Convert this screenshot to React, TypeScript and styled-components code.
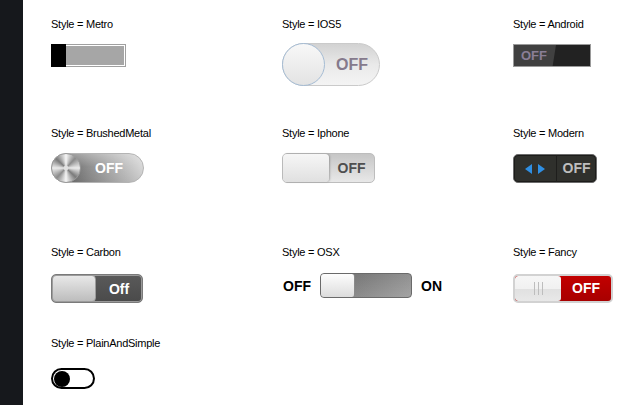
import styled, { createGlobalStyle } from "styled-components";

const GlobalStyle = createGlobalStyle`
  html, body {
    margin: 0;
    padding: 0;
    background: #fff;
  }
  body {
    font-family: "Liberation Sans", Arial, sans-serif;
  }
  * {
    box-sizing: border-box;
  }
`;

const Page = styled.div`
  display: flex;
  width: 638px;
  height: 405px;
  overflow: hidden;
`;

const Sidebar = styled.div`
  width: 23px;
  flex-shrink: 0;
  background: #16181c;
`;

const Board = styled.div`
  display: grid;
  grid-template-columns: repeat(3, 231px);
  grid-template-rows: 109px 119px 91px auto;
  padding: 18px 0 0 28px;
  align-content: start;
`;

const Cell = styled.div<{ $gap: number }>`
  display: flex;
  flex-direction: column;
  align-items: flex-start;
  gap: ${(p) => p.$gap}px;
`;

const Label = styled.div`
  font-size: 11px;
  line-height: 13px;
  letter-spacing: -0.25px;
  color: #000;
  white-space: nowrap;
`;

const SwitchText = styled.span<{ $color: string; $size?: number }>`
  flex: 1;
  text-align: center;
  font-weight: bold;
  font-size: ${(p) => p.$size ?? 14}px;
  color: ${(p) => p.$color};
`;

/* Metro */
const MetroTrack = styled.div`
  display: flex;
  width: 75px;
  height: 23px;
`;

const MetroKnob = styled.div`
  width: 15px;
  background: #000;
`;

const MetroFill = styled.div`
  flex: 1;
  background: #a6a6a6;
  border: 1px solid #a0a0a0;
  border-left: none;
  box-shadow: inset -1px 0 #fff, inset 0 1px #fff, inset 0 -1px #fff;
`;

/* IOS5 */
const Ios5Track = styled.div`
  display: flex;
  align-items: center;
  width: 98px;
  height: 43px;
  border-radius: 22px;
  border: 1px solid #cacaca;
  background: linear-gradient(180deg, #d2d2d2 0%, #e9e9e9 50%, #f4f4f4 100%);
`;

const Ios5Knob = styled.div`
  width: 43px;
  height: 43px;
  margin: -1px 0 -1px -1px;
  border-radius: 50%;
  border: 1px solid #a5bcd4;
  background: linear-gradient(180deg, #f8f8f8, #e3e3e3);
`;

/* Android */
const AndroidTrack = styled.div`
  display: flex;
  width: 78px;
  height: 23px;
  border: 1px solid #9a9a9a;
  background: #222;
`;

const AndroidOff = styled.div`
  width: 42px;
  height: 100%;
  padding-left: 7px;
  background: #404040;
  clip-path: polygon(0 0, 100% 0, 92% 100%, 0 100%);
  font-weight: bold;
  font-size: 13px;
  line-height: 21px;
  color: #8a7e96;
`;

/* BrushedMetal */
const BrushedTrack = styled.div`
  display: flex;
  align-items: center;
  width: 93px;
  height: 30px;
  border-radius: 15px;
  border: 1px solid #b4b4b4;
  background: linear-gradient(
      180deg,
      rgba(255, 255, 255, 0.3),
      rgba(255, 255, 255, 0) 45%,
      rgba(0, 0, 0, 0.08)
    ),
    linear-gradient(90deg, #555 0%, #8e8e8e 40%, #d8d8d8 100%);
`;

const BrushedKnob = styled.div`
  width: 30px;
  height: 30px;
  margin: -1px 0 -1px -1px;
  border-radius: 50%;
  border: 1px solid #9a9a9a;
  background: radial-gradient(circle, #e0e0e0 0 2px, transparent 3px),
    conic-gradient(
      #f6f6f6,
      #8a8a8a 12%,
      #ececec 25%,
      #7a7a7a 37%,
      #f6f6f6 50%,
      #8a8a8a 62%,
      #ececec 75%,
      #7a7a7a 87%,
      #f6f6f6
    );
`;

/* Iphone */
const IphoneTrack = styled.div`
  display: flex;
  width: 93px;
  height: 30px;
  border-radius: 5px;
  border: 1px solid #bdbdbd;
  background: linear-gradient(180deg, #c6c6c6, #e8e8e8);
`;

const IphoneKnob = styled.div`
  width: 46px;
  height: 100%;
  border-radius: 4px;
  background: linear-gradient(180deg, #f6f6f6, #e0e0e0);
  box-shadow: 1px 0 2px rgba(0, 0, 0, 0.25);
`;

/* Modern */
const ModernTrack = styled.div`
  display: flex;
  align-items: stretch;
  width: 84px;
  height: 29px;
  border-radius: 5px;
  border: 1px solid #6c6c6c;
  background: #2f302c;
  box-shadow: inset 0 0 0 1px #1c1c1a;
  line-height: 27px;
`;

const ModernArrows = styled.div`
  display: flex;
  align-items: center;
  justify-content: center;
  width: 43px;
  border-right: 1px solid #1e1e1c;
`;

/* Carbon */
const CarbonTrack = styled.div`
  display: flex;
  align-items: center;
  width: 92px;
  height: 29px;
  border-radius: 5px;
  border: 1px solid #7a7a7a;
  background: linear-gradient(180deg, #5a5a5a, #4a4a4a);
  box-shadow: inset 0 0 0 1px #9a9a9a;
`;

const CarbonKnob = styled.div`
  width: 44px;
  height: 27px;
  border-radius: 4px;
  border: 1px solid #9c9c9c;
  background: linear-gradient(180deg, #e8e8e8, #bdbdbd);
`;

/* OSX */
const OsxRow = styled.div`
  display: flex;
  align-items: center;
  gap: 9px;
  margin-left: 1px;
`;

const OsxWord = styled.span`
  font-weight: bold;
  font-size: 14px;
  color: #000;
`;

const OsxTrack = styled.div`
  display: flex;
  width: 92px;
  height: 25px;
  border-radius: 4px;
  border: 1px solid #6a6a6a;
  background: linear-gradient(
      180deg,
      rgba(0, 0, 0, 0.05),
      rgba(255, 255, 255, 0.1)
    ),
    linear-gradient(90deg, #6e6e6e, #8c8c8c 70%, #999);
`;

const OsxKnob = styled.div`
  width: 34px;
  height: 100%;
  border-radius: 3px;
  border-right: 1px solid #8a8a8a;
  background: linear-gradient(180deg, #fdfdfd, #dcdcdc);
`;

/* Fancy */
const FancyTrack = styled.div`
  display: flex;
  width: 100px;
  height: 29px;
  border-radius: 5px;
  border: 2px solid #d2d2d2;
  overflow: hidden;
  background: linear-gradient(180deg, #c20000, #a80000);
  line-height: 25px;
`;

const FancyKnob = styled.div`
  display: flex;
  align-items: center;
  justify-content: center;
  width: 46px;
  height: 100%;
  border-radius: 3px;
  background: linear-gradient(
    180deg,
    #f6f6f6 0%,
    #f1f1f1 50%,
    #e0e0e0 50%,
    #e8e8e8 100%
  );
`;

/* PlainAndSimple */
const PlainTrack = styled.div`
  display: flex;
  align-items: center;
  width: 44px;
  height: 21px;
  padding: 0 1px;
  border-radius: 11px;
  border: 2px solid #000;
  background: #fff;
`;

const PlainKnob = styled.div`
  width: 16px;
  height: 16px;
  border-radius: 50%;
  background: #000;
`;

export default function App() {
  return (
    <>
      <GlobalStyle />
      <Page>
        <Sidebar />
        <Board>
          <Cell $gap={13}>
            <Label>Style = Metro</Label>
            <MetroTrack>
              <MetroKnob />
              <MetroFill />
            </MetroTrack>
          </Cell>
          <Cell $gap={12}>
            <Label>Style = IOS5</Label>
            <Ios5Track>
              <Ios5Knob />
              <SwitchText $color="#857a8c" $size={16}>
                OFF
              </SwitchText>
            </Ios5Track>
          </Cell>
          <Cell $gap={13}>
            <Label>Style = Android</Label>
            <AndroidTrack>
              <AndroidOff>OFF</AndroidOff>
            </AndroidTrack>
          </Cell>

          <Cell $gap={13}>
            <Label>Style = BrushedMetal</Label>
            <BrushedTrack>
              <BrushedKnob />
              <SwitchText $color="#fff" style={{ paddingRight: 6 }}>
                OFF
              </SwitchText>
            </BrushedTrack>
          </Cell>
          <Cell $gap={13}>
            <Label>Style = Iphone</Label>
            <IphoneTrack>
              <IphoneKnob />
              <SwitchText $color="#4e4e4e" style={{ lineHeight: "28px" }}>
                OFF
              </SwitchText>
            </IphoneTrack>
          </Cell>
          <Cell $gap={14}>
            <Label>Style = Modern</Label>
            <ModernTrack>
              <ModernArrows>
                <svg width="20" height="10" viewBox="0 0 20 10">
                  <polygon points="7,0 7,10 0,5" fill="#2f8fe3" />
                  <polygon points="13,0 13,10 20,5" fill="#2f8fe3" />
                </svg>
              </ModernArrows>
              <SwitchText $color="#bebebe">OFF</SwitchText>
            </ModernTrack>
          </Cell>

          <Cell $gap={15}>
            <Label>Style = Carbon</Label>
            <CarbonTrack>
              <CarbonKnob />
              <SwitchText $color="#fff">Off</SwitchText>
            </CarbonTrack>
          </Cell>
          <Cell $gap={14}>
            <Label>Style = OSX</Label>
            <OsxRow>
              <OsxWord>OFF</OsxWord>
              <OsxTrack>
                <OsxKnob />
              </OsxTrack>
              <OsxWord>ON</OsxWord>
            </OsxRow>
          </Cell>
          <Cell $gap={15}>
            <Label>Style = Fancy</Label>
            <FancyTrack>
              <FancyKnob>
                <svg width="9" height="13" viewBox="0 0 9 13">
                  <rect x="0" y="0" width="1" height="13" fill="#bdbdbd" />
                  <rect x="4" y="0" width="1" height="13" fill="#bdbdbd" />
                  <rect x="8" y="0" width="1" height="13" fill="#bdbdbd" />
                </svg>
              </FancyKnob>
              <SwitchText $color="#fff">OFF</SwitchText>
            </FancyTrack>
          </Cell>

          <Cell $gap={18}>
            <Label>Style = PlainAndSimple</Label>
            <PlainTrack>
              <PlainKnob />
            </PlainTrack>
          </Cell>
        </Board>
      </Page>
    </>
  );
}
